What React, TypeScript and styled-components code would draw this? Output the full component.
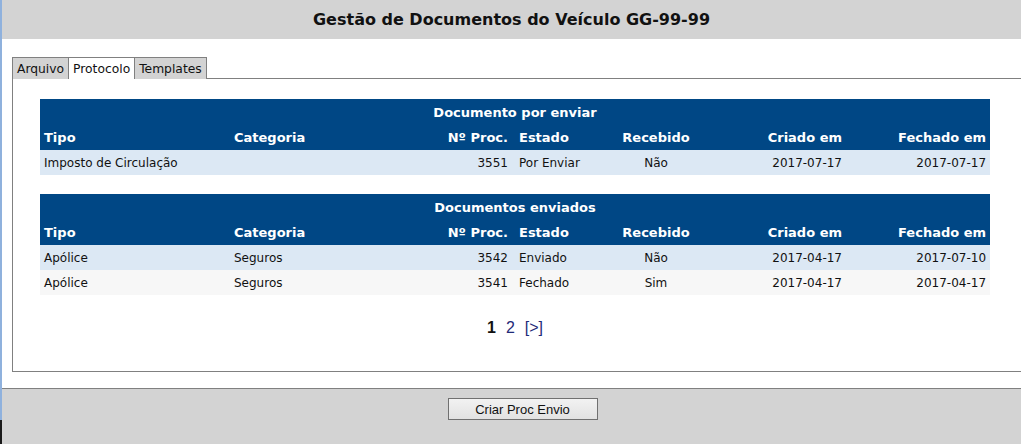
import * as React from 'react';
import styled, { createGlobalStyle } from 'styled-components';

const GlobalStyle = createGlobalStyle`
  html, body {
    margin: 0;
    padding: 0;
    background: #d3d3d3;
  }
  * {
    box-sizing: border-box;
  }
`;

const Page = styled.div`
  display: flex;
  height: 444px;
  width: 1021px;
  overflow: hidden;
  font-family: "DejaVu Sans", Verdana, sans-serif;
`;

// thin blue edge on the left of the window, dark at the bottom
const Edge = styled.div`
  width: 2px;
  flex: none;
  background: linear-gradient(to bottom, #8fb1dd 0, #8fb1dd 420px, #1a1a1a 420px);
`;

const Main = styled.div`
  flex: 1;
  display: flex;
  flex-direction: column;
  min-width: 0;
`;

const Header = styled.div`
  height: 39px;
  background: #d3d3d3;
  display: flex;
  align-items: center;
  justify-content: center;
`;

const Title = styled.h1`
  margin: 0;
  font-size: 16px;
  font-weight: bold;
  color: #111;
`;

const Body = styled.div`
  height: 350px;
  background: #fff;
  padding: 18px 0 0 10px;
  border-bottom: 1px solid #808080;
`;

const TabBar = styled.div`
  display: flex;
  height: 22px;
  border-bottom: 1px solid #808080;
  margin-right: -10px;
`;

interface TabProps {
  active?: boolean;
}

const Tab = styled.div<TabProps>`
  height: 22px;
  padding: 0 4px;
  display: flex;
  align-items: center;
  font-size: 12.3px;
  color: #111;
  background: ${(p: TabProps) => (p.active ? '#fff' : '#d3d3d3')};
  border: 1px solid #808080;
  border-bottom: none;
  margin-right: -1px;
`;

const Panel = styled.div`
  height: 293px;
  border-left: 1px solid #808080;
  border-bottom: 1px solid #808080;
  margin-right: -10px;
  padding: 20px 0 0 27px;
`;

const Table = styled.table`
  width: 950px;
  table-layout: fixed;
  border-collapse: collapse;
  font-size: 12px;
  margin-bottom: 19px;
`;

const Caption = styled.th`
  background: #004785;
  color: #fff;
  height: 25px;
  font-size: 13px;
  font-weight: bold;
  text-align: center;
  padding: 2px 4px 0;
`;

interface CellProps {
  align?: 'left' | 'right' | 'center';
  pad?: number;
}

const HeadCell = styled.th<CellProps>`
  background: #004785;
  color: #fff;
  height: 26px;
  font-size: 13px;
  font-weight: bold;
  text-align: ${(p: CellProps) => p.align || 'left'};
  padding: 0 4px 0 ${(p: CellProps) => p.pad || 4}px;
  white-space: nowrap;
`;

interface RowProps {
  alt?: boolean;
}

const Row = styled.tr<RowProps>`
  background: ${(p: RowProps) => (p.alt ? '#f7f7f7' : '#dce8f4')};
`;

const Cell = styled.td<CellProps>`
  height: 25px;
  color: #111;
  text-align: ${(p: CellProps) => p.align || 'left'};
  padding: 0 4px 0 ${(p: CellProps) => p.pad || 4}px;
  white-space: nowrap;
`;

const Pager = styled.div`
  width: 950px;
  display: flex;
  justify-content: center;
  gap: 10px;
  margin-top: 24px;
  font-family: "Liberation Sans", Arial, sans-serif;
  font-size: 16px;
`;

interface PageLinkProps {
  current?: boolean;
}

const PageLink = styled.span<PageLinkProps>`
  color: ${(p: PageLinkProps) => (p.current ? '#111' : '#1f2a78')};
  font-weight: ${(p: PageLinkProps) => (p.current ? 'bold' : 'normal')};
`;

const Footer = styled.div`
  flex: 1;
  display: flex;
  justify-content: center;
  padding: 9px 0 0 22px;
`;

const Button = styled.button`
  width: 150px;
  height: 22px;
  border: 1px solid #707070;
  background: linear-gradient(to bottom, #f2f2f2, #e2e2e2);
  font-family: "Liberation Sans", Arial, sans-serif;
  font-size: 13px;
  color: #111;
  padding: 0;
`;

interface Doc {
  tipo: string;
  categoria: string;
  proc: string;
  estado: string;
  recebido: string;
  criado: string;
  fechado: string;
}

const porEnviar: Doc[] = [
  { tipo: 'Imposto de Circulação', categoria: '', proc: '3551', estado: 'Por Enviar', recebido: 'Não', criado: '2017-07-17', fechado: '2017-07-17' },
];

const enviados: Doc[] = [
  { tipo: 'Apólice', categoria: 'Seguros', proc: '3542', estado: 'Enviado', recebido: 'Não', criado: '2017-04-17', fechado: '2017-07-10' },
  { tipo: 'Apólice', categoria: 'Seguros', proc: '3541', estado: 'Fechado', recebido: 'Sim', criado: '2017-04-17', fechado: '2017-04-17' },
];

const widths = [190, 190, 92, 94, 100, 140, 144];

function DocTable({ title, docs }: { title: string; docs: Doc[] }) {
  return (
    <Table>
      <colgroup>
        {widths.map((w, i) => <col key={i} style={{ width: w }} />)}
      </colgroup>
      <thead>
        <tr>
          <Caption colSpan={7}>{title}</Caption>
        </tr>
        <tr>
          <HeadCell>Tipo</HeadCell>
          <HeadCell>Categoria</HeadCell>
          <HeadCell align="right">Nº Proc.</HeadCell>
          <HeadCell pad={7}>Estado</HeadCell>
          <HeadCell align="center">Recebido</HeadCell>
          <HeadCell align="right">Criado em</HeadCell>
          <HeadCell align="right">Fechado em</HeadCell>
        </tr>
      </thead>
      <tbody>
        {docs.map((d, i) => (
          <Row key={d.proc} alt={i % 2 === 1}>
            <Cell>{d.tipo}</Cell>
            <Cell>{d.categoria}</Cell>
            <Cell align="right">{d.proc}</Cell>
            <Cell pad={7}>{d.estado}</Cell>
            <Cell align="center">{d.recebido}</Cell>
            <Cell align="right">{d.criado}</Cell>
            <Cell align="right">{d.fechado}</Cell>
          </Row>
        ))}
      </tbody>
    </Table>
  );
}

export default function App() {
  return (
    <Page>
      <GlobalStyle />
      <Edge />
      <Main>
        <Header>
          <Title>Gestão de Documentos do Veículo GG-99-99</Title>
        </Header>
        <Body>
          <TabBar>
            <Tab>Arquivo</Tab>
            <Tab active>Protocolo</Tab>
            <Tab>Templates</Tab>
          </TabBar>
          <Panel>
            <DocTable title="Documento por enviar" docs={porEnviar} />
            <DocTable title="Documentos enviados" docs={enviados} />
            <Pager>
              <PageLink current>1</PageLink>
              <PageLink>2</PageLink>
              <PageLink>[&gt;]</PageLink>
            </Pager>
          </Panel>
        </Body>
        <Footer>
          <Button>Criar Proc Envio</Button>
        </Footer>
      </Main>
    </Page>
  );
}
